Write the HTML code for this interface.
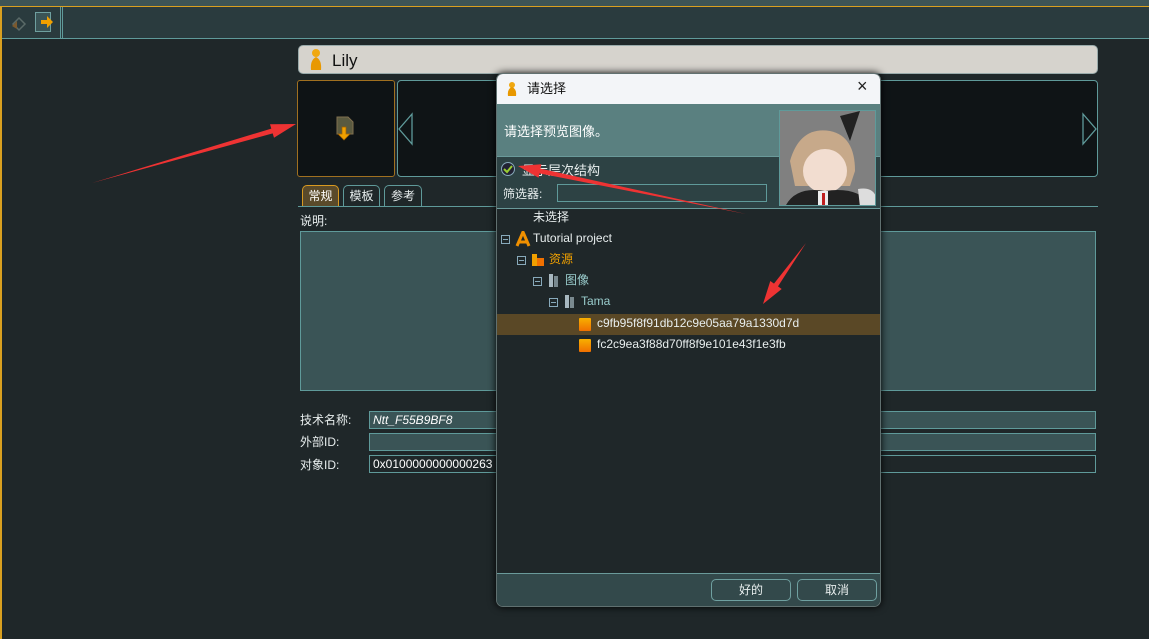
<!DOCTYPE html>
<html><head><meta charset="utf-8"><style>
*{margin:0;padding:0;box-sizing:border-box}
body{width:1149px;height:639px;overflow:hidden;background:#1f2729;font-family:"Liberation Sans","Noto Sans CJK SC",sans-serif;font-size:12px;color:#e8eeee;position:relative}
.a{position:absolute}
.inp{position:absolute;height:18px;border:1px solid #5f9a9a;background:#3a5456;padding-left:3px;line-height:16px;font-size:12px;color:#fff}
.tab{position:absolute;top:185px;height:22px;border:1px solid #5f9a9a;border-bottom:none;border-radius:5px 5px 0 0;font-size:12px;line-height:20px;text-align:center;background:#1f2729}
.tree{position:absolute;font-size:12px;line-height:21px;white-space:nowrap}
.pm{position:absolute;width:9px;height:9px;border:1px solid #8ab;}
.pm:after{content:"";position:absolute;left:1px;top:3px;width:5px;height:1px;background:#8ab}
.btn{position:absolute;top:579px;width:80px;height:22px;border:1px solid #6fa0a0;border-radius:5px;background:#33494b;text-align:center;line-height:20px;font-size:12px}
</style></head><body>
<div class="a" style="left:0;top:0;width:1149px;height:7px;background:#3d5456"></div>
<div class="a" style="left:0;top:6px;width:1149px;height:1px;background:#d9a020"></div>
<div class="a" style="left:0;top:7px;width:1149px;height:32px;background:#2a3b3e;border-bottom:1px solid #5f9a9a"></div>
<div class="a" style="left:60px;top:7px;width:1px;height:32px;background:#5f9a9a"></div>
<div class="a" style="left:62px;top:7px;width:1px;height:32px;background:#5f9a9a"></div>
<div class="a" style="left:0;top:7px;width:2px;height:632px;background:#d9a020"></div>
<svg class="a" style="left:10px;top:14px" width="18" height="18"><path d="M3 10 L9 4 L15 10 L9 16Z" fill="none" stroke="#5a6a68" stroke-width="1.5"/><path d="M2 12 L7 7 L7 15Z" fill="#7a5a30"/></svg>
<div class="a" style="left:35px;top:12px;width:16px;height:20px;border:1px solid #6fa0a0;background:#3a5456"></div>
<svg class="a" style="left:40px;top:15px" width="14" height="14"><path d="M1 5h6V1l6 6-6 6V9H1z" fill="#f0a000"/></svg>

<div class="a" style="left:298px;top:45px;width:800px;height:29px;background:#d6d3cd;border-radius:5px;border:1px solid #9aa"></div>
<svg class="a" style="left:308px;top:48px" width="16" height="24"><circle cx="8" cy="5" r="4" fill="#f0a810"/><path d="M3 22 Q2 12 8 9 Q14 12 13 22Z" fill="#e89800"/></svg>
<div class="a" style="left:332px;top:51px;font-size:17px;color:#111">Lily</div>

<div class="a" style="left:297px;top:80px;width:98px;height:97px;background:#0e1315;border:1px solid #a07020;border-radius:3px"></div>
<svg class="a" style="left:335px;top:115px" width="22" height="30"><path d="M2 2h11l5 5v12H2z" fill="#5a5a40" stroke="#807050"/><path d="M7 12h4v7h4l-6 6-6-6h4z" fill="#f0a000" stroke="#a06000" stroke-width=".7"/></svg>
<div class="a" style="left:397px;top:80px;width:701px;height:97px;background:#0f1416;border:1px solid #5f9a9a;border-radius:4px"></div>
<svg class="a" style="left:397px;top:112px" width="16" height="34"><path d="M15 2 L2 17 L15 32Z" fill="none" stroke="#5f9a9a" stroke-width="1.3"/></svg>
<svg class="a" style="left:1082px;top:112px" width="16" height="34"><path d="M1 2 L14 17 L1 32Z" fill="none" stroke="#5f9a9a" stroke-width="1.3"/></svg>

<div class="tab" style="left:302px;width:37px;background:#5a4a2a;border-color:#d99a20;color:#fff">常规</div>
<div class="tab" style="left:343px;width:37px">模板</div>
<div class="tab" style="left:384px;width:38px">参考</div>
<div class="a" style="left:298px;top:206px;width:800px;height:1px;background:#5f9a9a"></div>
<div class="a" style="left:300px;top:212px">说明:</div>
<div class="a" style="left:300px;top:231px;width:796px;height:160px;background:#3a5456;border:1px solid #5f9a9a"></div>

<div class="a" style="left:300px;top:411px">技术名称:</div>
<div class="a" style="left:300px;top:433px">外部ID:</div>
<div class="a" style="left:300px;top:456px">对象ID:</div>
<div class="inp" style="left:369px;top:411px;width:727px;font-style:italic">Ntt_F55B9BF8</div>
<div class="inp" style="left:369px;top:433px;width:727px"></div>
<div class="inp" style="left:369px;top:455px;width:727px;background:#1f2729">0x0100000000000263</div>

<!-- dialog -->
<div class="a" style="left:496px;top:73px;width:385px;height:534px;background:#1f2729;border:1px solid #607070;border-radius:7px;overflow:hidden;box-shadow:0 0 8px #000">
 <div class="a" style="left:0;top:0;width:385px;height:30px;background:#f3f5f8"></div>
 <svg class="a" style="left:9px;top:7px" width="12" height="16"><circle cx="6" cy="4" r="3" fill="#f0a810"/><path d="M2 15 Q1 8 6 6 Q11 8 10 15Z" fill="#e89800"/></svg>
 <div class="a" style="left:30px;top:4px;color:#111;font-size:13px">请选择</div>
 <div class="a" style="left:360px;top:2px;color:#222;font-size:18px">×</div>
 <div class="a" style="left:0;top:30px;width:385px;height:52px;background:#5a8080"></div>
 <div class="a" style="left:7px;top:47px;font-size:13px;color:#fff">请选择预览图像。</div>
 <div class="a" style="left:0;top:82px;width:385px;height:52px;background:#2d4244;border-top:1px solid #6a9a9a"></div>
 <div class="a" style="left:4px;top:88px;width:14px;height:14px;border-radius:50%;border:1px solid #8ab;background:#223"></div>
 <svg class="a" style="left:6px;top:90px" width="10" height="10"><path d="M1 5l3 3 5-6" stroke="#9c3" stroke-width="2" fill="none"/></svg>
 <div class="a" style="left:25px;top:86px;font-size:13px">显示层次结构</div>
 <div class="a" style="left:6px;top:111px">筛选器:</div>
 <div class="a" style="left:60px;top:110px;width:210px;height:18px;border:1px solid #5f9a9a;background:#2d4244"></div>
 <div class="a" style="left:282px;top:36px;width:97px;height:96px;border:1px solid #5f9a9a;background:#808080;overflow:hidden">
  <svg width="97" height="96"><path d="M60 5 L80 0 L70 30Z" fill="#222"/><path d="M10 50 Q20 15 50 20 Q75 25 75 60 L70 75 L15 75Z" fill="#c7a98a"/><ellipse cx="45" cy="60" rx="22" ry="22" fill="#f2ddd0"/><path d="M5 96 Q15 75 45 80 Q80 75 92 96Z" fill="#222"/><path d="M38 80h10v16h-10z" fill="#eee"/><path d="M42 82h3v12h-3z" fill="#c02020"/><path d="M78 78 Q95 75 97 90 L97 96 L80 96Z" fill="#ddd"/></svg>
 </div>
 <div class="a" style="left:0;top:134px;width:385px;height:1px;background:#6a9a9a"></div>
 <div class="tree" style="left:36px;top:133px">未选择</div>
 <div class="pm" style="left:4px;top:161px"></div>
 <svg class="a" style="left:18px;top:157px" width="16" height="16"><path d="M2 15 L8 1 L14 15 M4 11 H13" stroke="#f09000" stroke-width="3" fill="none"/></svg>
 <div class="tree" style="left:36px;top:154px">Tutorial project</div>
 <div class="pm" style="left:20px;top:182px"></div>
 <svg class="a" style="left:34px;top:178px" width="14" height="15"><path d="M1 2h5v12H1z" fill="#f0a000"/><path d="M6 6h7v8H6z" fill="#f07000"/></svg>
 <div class="tree" style="left:52px;top:175px;color:#f0a000">资源</div>
 <div class="pm" style="left:36px;top:203px"></div>
 <svg class="a" style="left:51px;top:199px" width="12" height="15"><path d="M1 1h4v13H1z" fill="#a8b8c0"/><path d="M6 3h4v11H6z" fill="#7a8a90"/></svg>
 <div class="tree" style="left:68px;top:196px;color:#9cc">图像</div>
 <div class="pm" style="left:52px;top:224px"></div>
 <svg class="a" style="left:67px;top:220px" width="12" height="15"><path d="M1 1h4v13H1z" fill="#a8b8c0"/><path d="M6 3h4v11H6z" fill="#7a8a90"/></svg>
 <div class="tree" style="left:84px;top:217px;color:#9cc">Tama</div>
 <div class="a" style="left:0;top:240px;width:385px;height:21px;background:#5a4826"></div>
 <div class="a" style="left:82px;top:244px;width:12px;height:13px;background:linear-gradient(#f8b000,#f07000);border-radius:1px"></div>
 <div class="tree" style="left:100px;top:239px">c9fb95f8f91db12c9e05aa79a1330d7d</div>
 <div class="a" style="left:82px;top:265px;width:12px;height:13px;background:linear-gradient(#f8b000,#f07000);border-radius:1px"></div>
 <div class="tree" style="left:100px;top:260px">fc2c9ea3f88d70ff8f9e101e43f1e3fb</div>
 <div class="a" style="left:0;top:499px;width:385px;height:35px;background:#33494b;border-top:1px solid #6a9a9a"></div>
</div>
<div class="btn" style="left:711px">好的</div>
<div class="btn" style="left:797px">取消</div>

<svg class="a" style="left:0;top:0" width="1149" height="639">
 <path d="M92 183 L272.7 133.4 L274 137.7 L296 124 L270 124.3 L271.3 128.6 Z" fill="#ee3333"/>
 <path d="M746 214 L540.5 168.6 L541.4 164.2 L518 166 L538.6 177.8 L539.5 173.4 Z" fill="#ee3333"/>
 <path d="M806 243 L778 286.4 L781.7 289 L763 304 L770.3 281 L774 283.6 Z" fill="#ee3333"/>
</svg>
</body></html>
